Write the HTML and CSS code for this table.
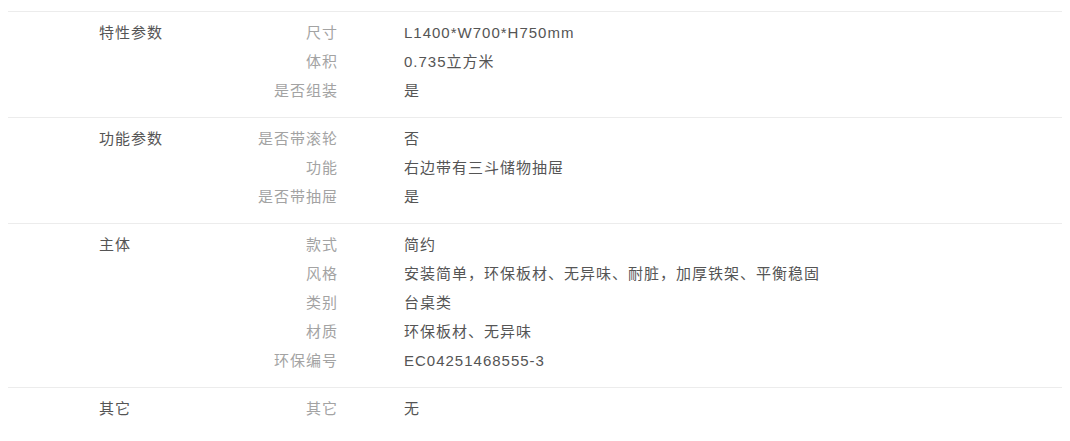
FILE: index.html
```html
<!DOCTYPE html>
<html>
<head>
  <meta charset="utf-8">
  <title>规格参数</title>
  <link rel="stylesheet" href="styles.css">
</head>
<body>
  <div class="spec-table">
    <!-- 特性参数 -->
    <div class="group">
      <div class="group-title">特性参数</div>
      <dl class="specs">
        <dt>尺寸</dt><dd>L1400*W700*H750mm</dd>
        <dt>体积</dt><dd>0.735立方米</dd>
        <dt>是否组装</dt><dd>是</dd>
      </dl>
    </div>

    <!-- 功能参数 -->
    <div class="group">
      <div class="group-title">功能参数</div>
      <dl class="specs">
        <dt>是否带滚轮</dt><dd>否</dd>
        <dt>功能</dt><dd>右边带有三斗储物抽屉</dd>
        <dt>是否带抽屉</dt><dd>是</dd>
      </dl>
    </div>

    <!-- 主体 -->
    <div class="group">
      <div class="group-title">主体</div>
      <dl class="specs">
        <dt>款式</dt><dd>简约</dd>
        <dt>风格</dt><dd>安装简单，环保板材、无异味、耐脏，加厚铁架、平衡稳固</dd>
        <dt>类别</dt><dd>台桌类</dd>
        <dt>材质</dt><dd>环保板材、无异味</dd>
        <dt>环保编号</dt><dd>EC04251468555-3</dd>
      </dl>
    </div>

    <!-- 其它 -->
    <div class="group">
      <div class="group-title">其它</div>
      <dl class="specs">
        <dt>其它</dt><dd>无</dd>
      </dl>
    </div>
  </div>
</body>
</html>
```

FILE: styles.css
```css
/* Página */
body {
  margin: 0;
  padding: 0 8px;
  background-color: #fff;
  font-family: "Liberation Sans", Arial, "Noto Sans CJK SC", sans-serif;
  font-size: 15px;
  letter-spacing: 1px;
  color: #555;
}

.spec-table {
  padding-top: 11px;
}

/* Cada grupo de parámetros */
.group {
  display: flex;
  border-top: 1px solid #ececec;
  padding: 6px 0 12px;
}

.group-title {
  width: 250px;
  padding-left: 91px;
  box-sizing: border-box;
  line-height: 29px;
  color: #555;
}

/* Lista de etiquetas y valores */
.specs {
  display: grid;
  grid-template-columns: 80px 1fr;
  column-gap: 66px;
  margin: 0;
  line-height: 29px;
}

.specs dt {
  text-align: right;
  color: #a3a3a3;
}

.specs dd {
  margin: 0;
  color: #555;
}
```
